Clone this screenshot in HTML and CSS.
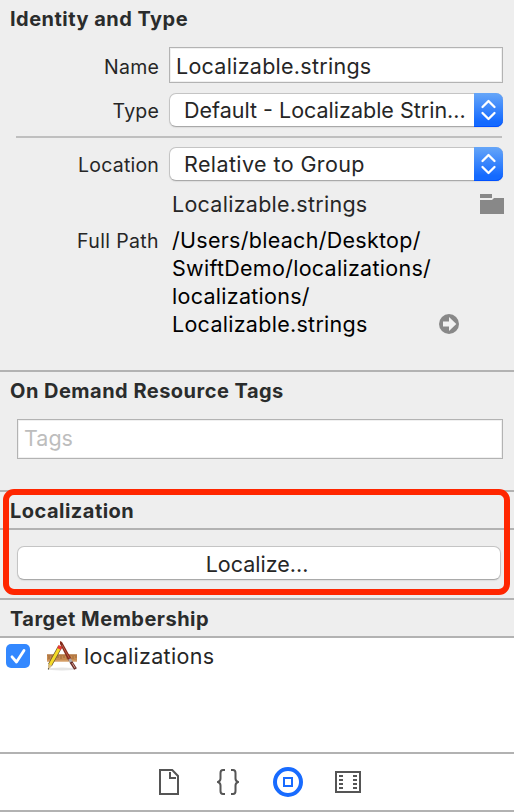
FILE: index.html
```html
<!DOCTYPE html>
<html lang="en">
<head>
<meta charset="utf-8">
<title>File Inspector</title>
<link rel="stylesheet" href="styles.css">
</head>
<body>
<main class="inspector">
  <section class="identity">
    <h2 class="heading">Identity and Type</h2>
    <div class="row row-name">
      <label class="label">Name</label>
      <div class="field"><span class="v-file">Localizable.strings</span></div>
    </div>
    <div class="row row-select">
      <label class="label">Type</label>
      <div class="select"><span class="select-text v-type">Default - Localizable Strin...</span>
        <span class="stepper"><svg width="29" height="34" viewBox="0 0 29 34"><path d="M8.5 14 14.5 8l6 6M8.5 20l6 6 6-6"/></svg></span></div>
    </div>
    <div class="divider"></div>
    <div class="row row-select">
      <label class="label">Location</label>
      <div class="select"><span class="select-text v-rel">Relative to Group</span>
        <span class="stepper"><svg width="29" height="34" viewBox="0 0 29 34"><path d="M8.5 14 14.5 8l6 6M8.5 20l6 6 6-6"/></svg></span></div>
    </div>
    <div class="row row-file">
      <span class="file v-file">Localizable.strings</span>
      <svg class="folder" width="24" height="20" viewBox="0 0 24 20"><path d="M0 0h12v4H0zM0 6h12l2-2h10v16H0z"/></svg>
    </div>
    <div class="row row-path">
      <label class="label label-path">Full Path</label>
      <div class="path">/Users/bleach/Desktop/<br>SwiftDemo/localizations/<br>localizations/<br>Localizable.strings</div>
      <svg class="reveal" width="20" height="20" viewBox="0 0 20 20"><circle cx="10" cy="10" r="10"/><path d="M4 7.5h6V3l7.3 7-7.3 7v-4.500H4z"/></svg>
    </div>
  </section>
  <section class="tags">
    <h2 class="heading">On Demand Resource Tags</h2>
    <div class="tag-field"><span>Tags</span></div>
  </section>
  <section class="localization">
    <h2 class="heading">Localization</h2>
    <div class="button-area"><button class="button" type="button">Localize...</button></div>
    <div class="highlight"></div>
  </section>
  <section class="target">
    <h2 class="heading">Target Membership</h2>
    <div class="member">
      <span class="checkbox"><svg width="24" height="24" viewBox="0 0 24 24"><path d="M6 12.800 10.500 18 18 6.500"/></svg></span>
      <svg class="app" width="32" height="30" viewBox="0 0 32 30">
        <ellipse cx="16" cy="28" rx="15" ry="1.500" fill="#e4e4e4"/>
        <path d="M1 13.500h30v7H1z" fill="#c78b50"/>
        <path d="M1 14h30" stroke="#a66b36"/>
        <path d="M1 20h30" stroke="#dfad79"/>
        <path d="M3 15v3m3-3v2m3-2v3m3-3v2m3-2v3m3-3v2m3-2v3m3-3v2m3-2v3m3-3v2" stroke="#8c5b30" stroke-width=".7"/>
        <path d="M14.200 5.500 4 24" stroke="#65502a" stroke-width="4.400"/>
        <path d="M14.200 5.500 4 24" stroke="#f5da28" stroke-width="3"/>
        <path d="m14.500 5-1.500 3" stroke="#e83a38" stroke-width="4"/>
        <path d="m2 23 4 2L2 29z" fill="#d6bd87"/><path d="m2 27 1 .5L2 29z" fill="#333"/>
        <path d="m14 0 2 1 9.500 17-3 2L14 3z" fill="#842b1b"/>
        <path d="m16 4 7.500 13.500" stroke="#c86650" stroke-width=".8"/>
        <path d="m23.500 18 2 4" stroke="#aaa" stroke-width="3"/>
        <path d="m25 21 4.500 7" stroke="#662c29" stroke-width="3.200"/><path d="m26 22 3 5" stroke="#d49c89"/>
      </svg>
      <span class="member-name">localizations</span>
    </div>
  </section>
  <nav class="library">
    <svg width="20" height="26" viewBox="0 0 20 26"><path d="M1 1h12.200L19 7v18H1z"/><path d="M11 3v6h6"/></svg>
    <svg class="braces" width="22" height="26" viewBox="0 0 22 26"><path d="M8 1H6Q3.500 1 3.500 4v5.500Q3.500 12 1 13q2.500 1 2.500 3.500V22q0 3 2.500 3h2M14 1h2q2.500 0 2.500 3v5.500Q18.500 12 21 13q-2.500 1-2.500 3.500V22q0 3-2.500 3h-2"/></svg>
    <svg class="active" width="30" height="30" viewBox="0 0 30 30"><circle cx="15" cy="15" r="13"/><path d="M11 11h8v8h-8z"/></svg>
    <svg class="film" width="26" height="22" viewBox="0 0 26 22"><path d="M1 1h24v20H1zM4 5h4M4 9h4M4 13h4M4 17h4M18 5h4M18 9h4M18 13h4M18 17h4"/></svg>
  </nav>
</main>
</body>
</html>
```
FILE: styles.css
```css
* { box-sizing: border-box; }
body { margin: 0; font-family: Inter, "Liberation Sans", sans-serif; font-size: 21.5px; color: #262626; background: #fff; }
svg { display: block; flex: none; }
.inspector { display: flex; flex-direction: column; width: 514px; height: 812px; overflow: hidden; border-bottom: 2px solid #b2b2b2; white-space: nowrap; }
section { background: #eee; }
.heading { margin: 0; padding-left: 10px; height: 38px; font-size: 20px; line-height: 38px; font-weight: 700; letter-spacing: .48px; color: #2a2c2c; }
.identity { height: 370px; }
.row { display: flex; }
.label { width: 159px; margin-right: 10px; text-align: right; font-size: 19.5px; letter-spacing: .2px; flex: none; }
.label-path { letter-spacing: .37px; }
.v-file { letter-spacing: .27px; }
.v-rel { letter-spacing: .4px; }
.row-name { height: 36px; margin-top: 9px; line-height: 40px; }
.field { width: 334px; height: 36px; padding-left: 6px; border: 1px solid #b3b3b3; background: #fff; line-height: 36px; box-shadow: inset 0 0 0 1px #f0f0f0; }
.row-select { height: 34px; margin-top: 10px; line-height: 36px; }
.select { display: flex; width: 334px; height: 34px; border: 1px solid #c4c4c4; border-bottom-color: #a9a9a9; border-radius: 7px; background: #fff; line-height: 33px; box-shadow: 0 1px 1px #ddd; }
.select-text { flex: 1; padding-left: 14px; }
.stepper { width: 29px; height: 34px; margin: -1px -1px 0 0; border-radius: 0 7px 7px 0; background: linear-gradient(#66a6f8, #146aff 85%); box-shadow: inset 0 -1px #0050ff; overflow: hidden; }
.stepper path { fill: none; stroke: #fff; stroke-width: 2.3; stroke-linecap: round; stroke-linejoin: round; }
.divider { height: 2px; margin: 9px 12px 0 16px; background: #bfbfbf; }
.divider + .row-select { margin-top: 9px; }
.row-file { height: 45px; padding: 0 10px 0 172px; justify-content: space-between; line-height: 46px; }
.folder { margin-top: 13px; fill: #888; }
.row-path { line-height: 28px; }
.label-path { padding-top: 1px; }
.path { width: 267px; margin-left: 3px; color: #000; letter-spacing: .28px; }
.reveal { align-self: flex-end; margin-bottom: 4px; fill: #888; }
.reveal path { fill: #f1f1f1; }
.tags { height: 120px; border-top: 2px solid #b2b2b2; }
.tag-field { width: 486px; height: 40px; margin: 9px 0 0 17px; padding-left: 6px; border: 1px solid #b3b3b3; background: #fff; color: #bdbdbd; line-height: 37px; box-shadow: inset 0 0 0 1px #f0f0f0; }
.localization { position: relative; height: 108px; border-top: 2px solid #b2b2b2; }
.button-area { height: 70px; padding: 16px 13px 0 17px; border-top: 2px solid #b2b2b2; }
.localization .heading, .target .heading { height: 36px; }
.button { display: block; width: 484px; height: 34px; padding: 1px 4px 0 0; border: 1px solid #c4c4c4; border-bottom-color: #a9a9a9; border-radius: 7px; background: #fff; font: inherit; color: inherit; line-height: 32px; box-shadow: 0 1px 1px #ddd; }
.highlight { position: absolute; left: 3px; top: -3px; width: 507px; height: 106px; border: 6px solid #ff2600; border-radius: 11px; }
.target { height: 154px; border-top: 2px solid #b2b2b2; background: #fff; }
.target .heading { background: #eee; }
.member { display: flex; height: 118px; padding: 4px 0 0 6px; border-top: 2px solid #b2b2b2; line-height: 28px; }
.checkbox { width: 24px; height: 24px; margin: 2px 16px 0 0; border-radius: 5px; background: #3388ff; }
.checkbox path { fill: none; stroke: #fff; stroke-width: 2.8; stroke-linecap: round; stroke-linejoin: round; }
.app { margin-top: -1px; }
.member-name { margin-left: 6px; letter-spacing: .32px; }
.library { display: flex; align-items: center; height: 58px; padding-left: 159px; border-top: 2px solid #b2b2b2; background: #fff; }
.library path, .library circle { fill: none; stroke: #555; stroke-width: 2; }
.braces { margin: 0 34px 0 38px; }
.film { margin-left: 32px; }
.library .active path { stroke: #186bff; }
.library .active circle { stroke: #186bff; stroke-width: 4; }
```
